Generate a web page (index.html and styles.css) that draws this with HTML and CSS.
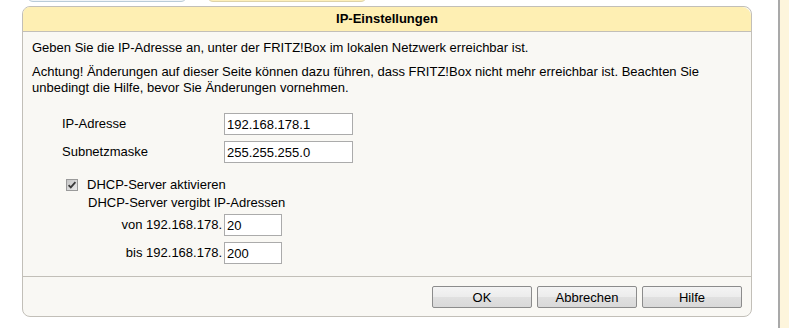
FILE: index.html
```html
<!DOCTYPE html>
<html lang="de">
<head>
    <meta charset="UTF-8">
    <title>IP-Einstellungen</title>
    <link rel="stylesheet" href="styles.css">
</head>
<body>

<div class="page">
    <div class="main">
        <div class="tabs">
            <div class="tab tab-blue"></div>
            <div class="tab tab-yellow"></div>
        </div>

        <div class="box">
            <div class="box-head">IP-Einstellungen</div>

            <div class="box-body">
                <p class="intro">Geben Sie die IP-Adresse an, unter der FRITZ!Box im lokalen Netzwerk erreichbar ist.</p>
                <p class="warn">Achtung! Änderungen auf dieser Seite können dazu führen, dass FRITZ!Box nicht mehr erreichbar ist. Beachten Sie unbedingt die Hilfe, bevor Sie Änderungen vornehmen.</p>

                <div class="form-row">
                    <label for="ip">IP-Adresse</label>
                    <input type="text" id="ip" class="field" value="192.168.178.1">
                </div>
                <div class="form-row">
                    <label for="mask">Subnetzmaske</label>
                    <input type="text" id="mask" class="field" value="255.255.255.0">
                </div>

                <div class="check-row">
                    <span class="check">
                        <svg width="12" height="12" viewBox="0 0 12 12">
                            <defs>
                                <linearGradient id="cb" x1="0" y1="0" x2="1" y2="1">
                                    <stop offset="0" stop-color="#c4c4c4"/>
                                    <stop offset="1" stop-color="#ececec"/>
                                </linearGradient>
                            </defs>
                            <rect x="0.5" y="0.5" width="11" height="11" fill="url(#cb)" stroke="#9a9a9a"/>
                            <path d="M2.6 6.1 L4.8 8.4 L9.4 3.2" fill="none" stroke="#3a3a3a" stroke-width="1.8"/>
                        </svg>
                    </span>
                    <span>DHCP-Server aktivieren</span>
                </div>
                <div class="dhcp">
                    <div class="dhcp-title">DHCP-Server vergibt IP-Adressen</div>
                    <div class="range-row">
                        <label for="von">von 192.168.178.</label>
                        <input type="text" id="von" class="field short" value="20">
                    </div>
                    <div class="range-row">
                        <label for="bis">bis 192.168.178.</label>
                        <input type="text" id="bis" class="field short" value="200">
                    </div>
                </div>
            </div>

            <div class="box-foot">
                <button>OK</button>
                <button>Abbrechen</button>
                <button>Hilfe</button>
            </div>
        </div>
    </div>
    <div class="side"></div>
</div>

</body>
</html>
```

FILE: styles.css
```css
body {
    margin: 0;
    font-family: "Liberation Sans", Arial, sans-serif;
    font-size: 13px;
    line-height: 16px;
    color: #000;
    background: #fff;
}
.page {
    display: flex;
    height: 328px;
}
.main {
    width: 778px;
}
.side {
    width: 9px;
    border-left: 2px solid #a9a9a9;
    background: #fdf5dc;
}
.tabs {
    display: flex;
    align-items: flex-end;
    gap: 20px;
    height: 2px;
    padding-left: 27px;
    overflow: hidden;
}
.tab {
    width: 158px;
    height: 20px;
    border-radius: 0 0 6px 6px;
}
.tab-blue {
    background: #f1f5f8;
    border: 1px solid #b9cbd8;
}
.tab-yellow {
    background: #fdf0bb;
    border: 1px solid #ddd2a8;
}
.box {
    margin: 4px 0 0 22px;
    width: 728px;
    border: 1px solid #c2bfb8;
    border-radius: 8px;
    background: #f9f8f4;
}
.box-head {
    height: 24px;
    line-height: 24px;
    text-align: center;
    font-weight: bold;
    background: #feefb3;
    border-bottom: 1px solid #c2bfb8;
    border-radius: 7px 9px 0 0;
}
.box-body {
    padding: 8px 9px 12px 9px;
}
.box-body p {
    margin: 0;
}
.intro {
    margin-bottom: 8px !important;
}
.warn {
    margin-bottom: 17px !important;
}
.form-row {
    display: flex;
    align-items: center;
    height: 22px;
    margin-bottom: 6px;
    padding-left: 30px;
}
.form-row label {
    width: 162px;
}
.field {
    box-sizing: border-box;
    width: 129px;
    height: 22px;
    margin: 0;
    padding: 1px 2px 0 2px;
    border: 1px solid #ababab;
    background: #fff;
    font-family: "Liberation Sans", Arial, sans-serif;
    font-size: 13px;
    color: #000;
}
.field.short {
    width: 58px;
}
.check-row {
    display: flex;
    align-items: center;
    gap: 9px;
    margin-top: 14px;
    padding-left: 34px;
    height: 16px;
}
.check {
    display: flex;
}
.dhcp {
    padding-left: 55px;
}
.dhcp-title {
    margin-top: 2px;
    height: 16px;
    line-height: 16px;
    margin-bottom: 3px;
    padding-left: 1px;
}
.range-row {
    display: flex;
    align-items: center;
    height: 22px;
    margin-bottom: 6px;
}
.range-row:last-child {
    margin-bottom: 0;
}
.range-row label {
    width: 135px;
    text-align: right;
    padding-right: 2px;
}
.box-foot {
    display: flex;
    justify-content: flex-end;
    gap: 5px;
    padding: 9px 9px 8px 0;
    border-top: 1px solid #c2bfb8;
}
.box-foot button {
    width: 100px;
    height: 22px;
    padding: 0;
    border: 1px solid #8c8c8c;
    border-radius: 2px;
    background: linear-gradient(#f4f4f4, #ececec 50%, #e0e0e0 51%, #d9d9d9);
    font-family: "Liberation Sans", Arial, sans-serif;
    font-size: 13px;
    color: #000;
}
```
